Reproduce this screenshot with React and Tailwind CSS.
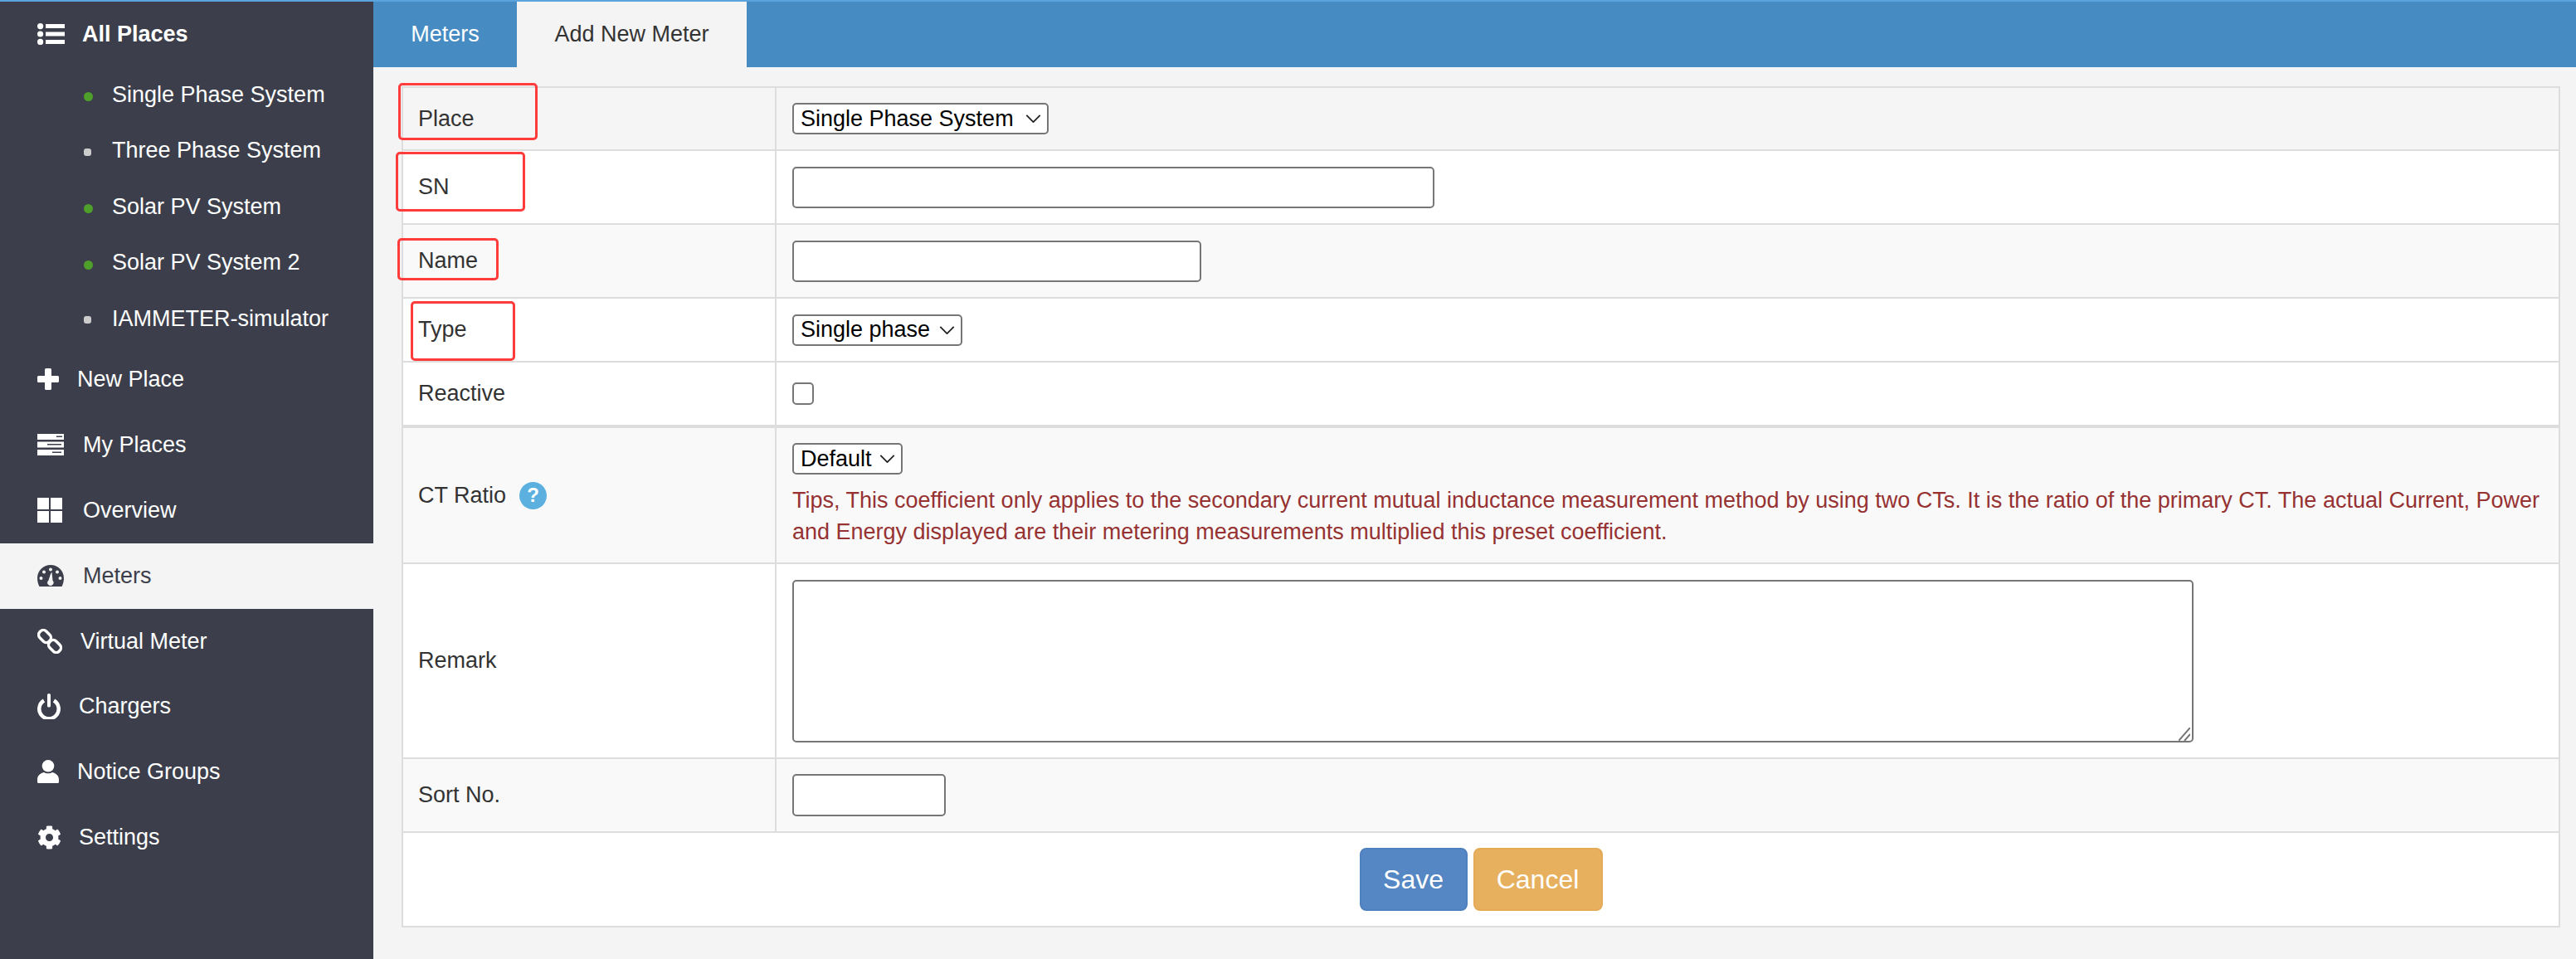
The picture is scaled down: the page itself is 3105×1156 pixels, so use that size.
import React from 'react';
import { FaCog } from 'react-icons/fa';

const ListIcon = ({ className }) => (
  <svg viewBox="0 0 33 26" className={className}>
    <g fill="currentColor">
      <circle cx="3.6" cy="3.6" r="3.6" />
      <circle cx="3.6" cy="13" r="3.6" />
      <circle cx="3.6" cy="22.4" r="3.6" />
      <path d="M10 1h23v5H10zM10 10.5h23v5H10zM10 20h23v5H10z" />
    </g>
  </svg>
);

const PlusIcon = ({ className }) => (
  <svg viewBox="0 0 26 26" className={className}>
    <path fill="currentColor" d="M9 1.5Q9 0 10.5 0h5Q17 0 17 1.5V9h7.5Q26 9 26 10.5v5q0 1.5-1.5 1.5H17v7.5q0 1.5-1.5 1.5h-5Q9 26 9 24.500V17H1.500Q0 17 0 15.500v-5Q0 9 1.500 9H9z" />
  </svg>
);

const ServerIcon = ({ className }) => (
  <svg viewBox="0 0 32 26" className={className}>
    <path fill="currentColor" d="M0 0h32v7H0zM0 9.500h32v7H0zM0 19h32v7H0z" />
    <path fill="#3c3f4b" d="M23 2.500h7v1.600h-7zM12 12h17v1.600H12zM18 21.500h11v1.600H18z" />
  </svg>
);

const GridIcon = ({ className }) => (
  <svg viewBox="0 0 30 30" className={className}>
    <path fill="currentColor" d="M0 0h14v14H0zM16 0h14v14H16zM0 16h14v14H0zM16 16h14v14H16z" />
  </svg>
);

const GaugeIcon = ({ className }) => (
  <svg viewBox="0 0 32 26" className={className}>
    <path
      fill="currentColor"
      fillRule="evenodd"
      d="M16 0C7 0 0 7 0 16c0 3.500 1 7 2.500 10h27C31 23 32 19.500 32 16 32 7 25 0 16 0zM16 3.500a2 2 0 1 1 0 4 2 2 0 0 1 0-4zM8 6.500a2 2 0 1 1 0 4 2 2 0 0 1 0-4zM24 6.500a2 2 0 1 1 0 4 2 2 0 0 1 0-4zM4.500 14a2 2 0 1 1 0 4 2 2 0 0 1 0-4zM27.500 14a2 2 0 1 1 0 4 2 2 0 0 1 0-4zM17.500 8.500l1 10.200a3.500 3.500 0 1 1-5 0z"
    />
    <path fill="#f4f4f4" d="M16.500 9l1 9.800a3.300 3.300 0 1 1-4 .1z" />
  </svg>
);

const ChainIcon = ({ className }) => (
  <svg viewBox="0 0 30 30" className={className}>
    <g fill="none" stroke="currentColor" strokeWidth="3.4">
      <rect x="1" y="3.500" width="16" height="11" rx="5" transform="rotate(45 9 9)" />
      <rect x="13" y="15.500" width="16" height="11" rx="5" transform="rotate(45 21 21)" />
    </g>
  </svg>
);

const PowerIcon = ({ className }) => (
  <svg viewBox="0 0 28 31" className={className}>
    <path fill="none" stroke="currentColor" strokeWidth="4.500" d="M8 8.500a11.700 11.700 0 1 0 12 0" />
    <path fill="currentColor" d="M12 1.500Q12 0 14 0t2 1.500V15q0 1.500-2 1.500T12 15z" />
  </svg>
);

const UserIcon = ({ className }) => (
  <svg viewBox="0 0 26 28" className={className}>
    <g fill="currentColor">
      <circle cx="13" cy="7.300" r="7.300" />
      <path d="M0 24c0-5 3-7.500 8-9 2 1.800 8 1.800 10 0 5 1.500 8 4 8 9v2.500q0 1.500-1.500 1.500h-23Q0 28 0 26.500z" />
    </g>
  </svg>
);

const Chevron = () => (
  <svg
    viewBox="0 0 20 11"
    className="absolute top-[14px] right-[9px] w-[19px] h-[10px] pointer-events-none"
  >
    <path fill="none" stroke="#222222" strokeWidth="2" d="M1 1l9 9 9-9" />
  </svg>
);

const places = [
  { name: 'Single Phase System', online: true },
  { name: 'Three Phase System', online: false },
  { name: 'Solar PV System', online: true },
  { name: 'Solar PV System 2', online: true },
  { name: 'IAMMETER-simulator', online: false },
];

const menu = [
  { name: 'New Place', icon: <PlusIcon className="w-[26px] h-[26px] mr-[22px]" /> },
  { name: 'My Places', icon: <ServerIcon className="w-[32px] h-[26px] mr-[23px]" /> },
  { name: 'Overview', icon: <GridIcon className="w-[30px] h-[30px] mr-[25px]" /> },
  { name: 'Meters', active: true, icon: <GaugeIcon className="w-[32px] h-[26px] mr-[23px]" /> },
  { name: 'Virtual Meter', icon: <ChainIcon className="w-[30px] h-[30px] mr-[22px]" /> },
  { name: 'Chargers', lift: true, icon: <PowerIcon className="w-[28px] h-[31px] mr-[22px]" /> },
  { name: 'Notice Groups', lift: true, icon: <UserIcon className="w-[26px] h-[28px] mr-[22px]" /> },
  { name: 'Settings', lift: true, icon: <FaCog className="w-[29px] h-[29px] mr-[21px]" /> },
];

const Sidebar = () => (
  <aside className="w-[450px] shrink-0 bg-[#3c3f4b] text-white">
    <div className="h-[78px] flex items-center pl-[45px] font-bold">
      <ListIcon className="w-[33px] h-[26px] mr-[21px]" />
      All Places
    </div>
    {places.map((place) => (
      <div key={place.name} className="h-[67.5px] flex items-center pl-[101px]">
        {place.online ? (
          <span className="w-[11px] h-[11px] rounded-full bg-[#4fa02a] mr-[23px] mt-[6px]" />
        ) : (
          <span className="w-[9px] h-[9px] rounded-[3px] bg-[#cccccc] mr-[25px] mt-[4px]" />
        )}
        {place.name}
      </div>
    ))}
    {menu.map((item) => (
      <div
        key={item.name}
        className={`h-[79px] flex items-center pl-[45px] ${item.active ? 'bg-[#f4f4f4] text-[#3c3f4b]' : ''} ${item.lift ? 'pb-[2px]' : ''}`}
      >
        {item.icon}
        {item.name}
      </div>
    ))}
  </aside>
);

const Row = ({ label, height, striped, extra, children }) => (
  <div
    className={`flex border-b-2 border-[#dddddd] ${striped ? 'bg-[#f9f9f9]' : 'bg-white'} ${extra || ''}`}
    style={{ height }}
  >
    <div className="w-[450px] shrink-0 border-r-2 border-[#dddddd] pl-[18px] flex items-center">
      {label}
    </div>
    <div className="flex-1 pl-[19px] flex flex-col justify-center items-start">{children}</div>
  </div>
);

const Select = ({ width, children }) => (
  <div className={`relative ${width}`}>
    <select className="block w-full h-[38px] border-2 border-[#767676] rounded-[5px] bg-white text-black pl-[8px] py-0 leading-[31px] appearance-none">
      <option>{children}</option>
    </select>
    <Chevron />
  </div>
);

const inputClass = 'border-2 border-[#767676] rounded-[5px] bg-white block';

const Marker = ({ className }) => (
  <div className={`absolute border-[3px] border-[#ff3b3b] rounded-[5px] ${className}`} />
);

const App = () => (
  <div
    className="w-[3105px] h-[1156px] overflow-hidden bg-[#f4f4f4] text-[27px] text-[#333333] border-t-2 border-[#5ba3dc] flex"
    style={{ fontFamily: '"Liberation Sans", Arial, sans-serif' }}
  >
    <Sidebar />
    <main className="flex-1 relative">
      <div className="h-[79px] bg-[#468cc2] flex">
        <div className="w-[173px] flex items-center justify-center text-white">Meters</div>
        <div className="w-[277px] flex items-center justify-center bg-[#f4f4f4]">Add New Meter</div>
      </div>

      <div className="mt-[23px] ml-[34px] w-[2602px] border-x-2 border-t-2 border-[#dddddd]">
        <Row label="Place" height={76} extra="!bg-[#f5f5f5]">
          <Select width="w-[309px]">Single Phase System</Select>
        </Row>
        <Row label="SN" height={89}>
          <input className={`${inputClass} w-[774px] h-[50px]`} />
        </Row>
        <Row label="Name" height={89} striped>
          <input className={`${inputClass} w-[493px] h-[50px]`} />
        </Row>
        <Row label="Type" height={77}>
          <Select width="w-[205px]">Single phase</Select>
        </Row>
        <Row label="Reactive" height={77}>
          <input type="checkbox" className="w-[26px] h-[27px] appearance-none border-2 border-[#767676] rounded-[5px] bg-white" />
        </Row>
        <Row
          label={
            <>
              CT Ratio
              <span className="ml-[16px] w-[33px] h-[33px] rounded-full bg-[#5bb0e0] text-white text-[24px] font-bold flex items-center justify-center">
                ?
              </span>
            </>
          }
          height={166}
          striped
          extra="border-t-2"
        >
          <Select width="w-[133px]">Default</Select>
          <p className="mt-[12px] leading-[38px] text-[#963232] w-[2140px]">
            Tips, This coefficient only applies to the secondary current mutual inductance measurement method by using
            two CTs. It is the ratio of the primary CT. The actual Current, Power and Energy displayed are their
            metering measurements multiplied this preset coefficient.
          </p>
        </Row>
        <Row label="Remark" height={235}>
          <div className="relative">
            <textarea className={`${inputClass} w-[1689px] h-[196px] resize-none`} />
            <svg viewBox="0 0 14 16" className="absolute right-[4px] bottom-[2px] w-[14px] h-[16px]">
              <path fill="none" stroke="#767676" strokeWidth="2" d="M0 16L14 0M7 16l7-8" />
            </svg>
          </div>
        </Row>
        <Row label="Sort No." height={89} striped>
          <input className={`${inputClass} w-[185px] h-[51px]`} />
        </Row>
        <div className="h-[114px] bg-white border-b-2 border-[#dddddd] flex items-center justify-center gap-[7px] text-[32px] text-white">
          <button className="w-[130px] h-[76px] rounded-[8px] bg-[#5587c4] border-2 border-[#4f80bf]">Save</button>
          <button className="w-[156px] h-[76px] rounded-[8px] bg-[#e6b05f] border-2 border-[#e5aa55]">Cancel</button>
        </div>
      </div>

      <Marker className="left-[30px] top-[98px] w-[168px] h-[69px]" />
      <Marker className="left-[27px] top-[181px] w-[156px] h-[72px]" />
      <Marker className="left-[29px] top-[285px] w-[122px] h-[51px]" />
      <Marker className="left-[45px] top-[361px] w-[126px] h-[72px]" />
    </main>
  </div>
);

export default App;
